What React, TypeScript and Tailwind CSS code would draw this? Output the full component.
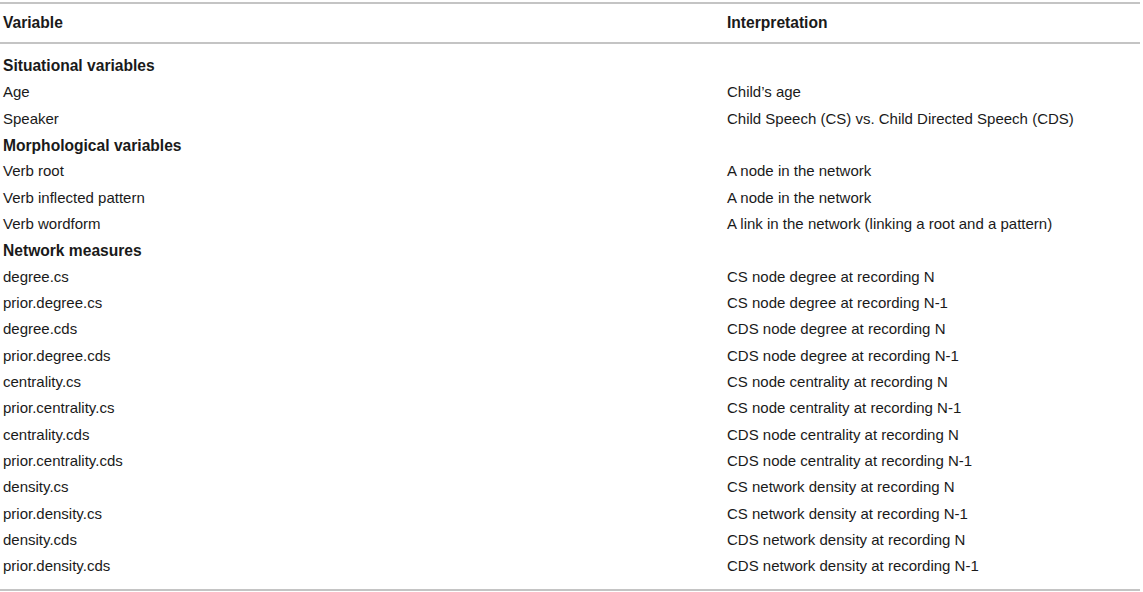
import React from 'react'

type Row = { name: string; desc?: string; group?: boolean }

const ROWS: Row[] = [
  { name: 'Situational variables', group: true },
  { name: 'Age', desc: 'Child’s age' },
  { name: 'Speaker', desc: 'Child Speech (CS) vs. Child Directed Speech (CDS)' },
  { name: 'Morphological variables', group: true },
  { name: 'Verb root', desc: 'A node in the network' },
  { name: 'Verb inflected pattern', desc: 'A node in the network' },
  { name: 'Verb wordform', desc: 'A link in the network (linking a root and a pattern)' },
  { name: 'Network measures', group: true },
  { name: 'degree.cs', desc: 'CS node degree at recording N' },
  { name: 'prior.degree.cs', desc: 'CS node degree at recording N-1' },
  { name: 'degree.cds', desc: 'CDS node degree at recording N' },
  { name: 'prior.degree.cds', desc: 'CDS node degree at recording N-1' },
  { name: 'centrality.cs', desc: 'CS node centrality at recording N' },
  { name: 'prior.centrality.cs', desc: 'CS node centrality at recording N-1' },
  { name: 'centrality.cds', desc: 'CDS node centrality at recording N' },
  { name: 'prior.centrality.cds', desc: 'CDS node centrality at recording N-1' },
  { name: 'density.cs', desc: 'CS network density at recording N' },
  { name: 'prior.density.cs', desc: 'CS network density at recording N-1' },
  { name: 'density.cds', desc: 'CDS network density at recording N' },
  { name: 'prior.density.cds', desc: 'CDS network density at recording N-1' },
]

export default function App(): React.ReactElement {
  return (
    <div className="w-[1143px] h-[592px] bg-white pt-[2px] text-[15px] text-[#1a1a1a] font-['Liberation_Sans',Arial,sans-serif]">
      <div className="w-[1140px] border-t-2 border-b-2 border-[#c4c4c4]">
        {/* Header */}
        <div className="flex items-center h-[40px] border-b-2 border-[#c4c4c4] font-bold text-[15.6px]">
          <div className="w-[724px] pl-[3px]">Variable</div>
          <div className="flex-1 pl-[3px]">Interpretation</div>
        </div>

        {/* Body */}
        <div className="pt-[9px] pb-[9px]">
          {ROWS.map(r => (
            <div key={r.name} className="flex items-center h-[26.35px]">
              <div className={`w-[724px] pl-[3px] ${r.group ? 'font-bold text-[15.6px]' : ''}`}>{r.name}</div>
              <div className="flex-1 pl-[3px]">{r.desc}</div>
            </div>
          ))}
        </div>
      </div>
    </div>
  )
}
